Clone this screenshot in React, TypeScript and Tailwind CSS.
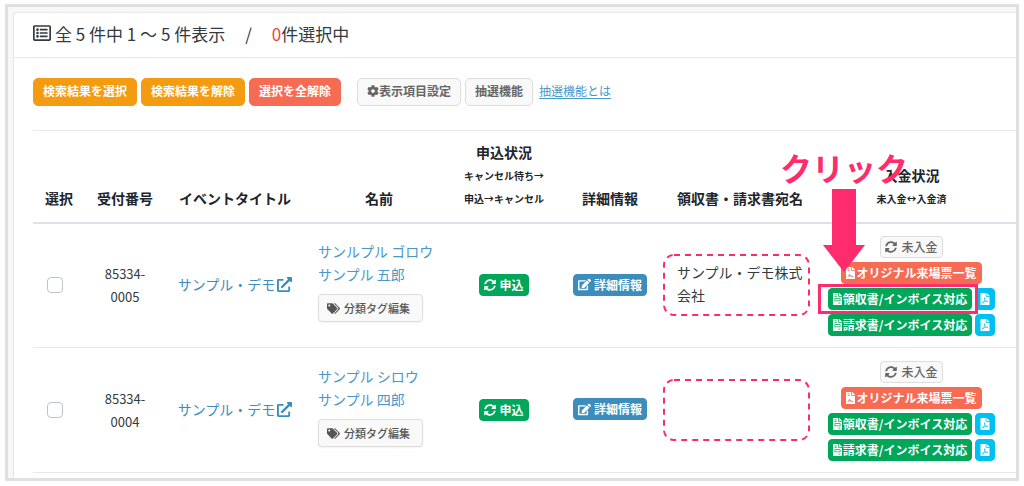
import type { ReactNode } from "react";
import {
  FaCog,
  FaEdit,
  FaExternalLinkAlt,
  FaFileContract,
  FaFileInvoice,
  FaFilePdf,
  FaRegListAlt,
  FaSyncAlt,
  FaTags,
} from "react-icons/fa";

type Entry = {
  id: [string, string];
  kana: string;
  name: string;
  addressee: string;
  highlighted: boolean;
};

const entries: Entry[] = [
  { id: ["85334-", "0005"], kana: "サンルプル ゴロウ", name: "サンプル 五郎", addressee: "サンプル・デモ株式会社", highlighted: true },
  { id: ["85334-", "0004"], kana: "サンプル シロウ", name: "サンプル 四郎", addressee: "", highlighted: false },
];

const toneClasses = {
  amber: "bg-[#f39c12] text-white border-[#f39c12]",
  red: "bg-[#f66b54] text-white border-[#f66b54]",
  green: "bg-[#00a65a] text-white border-[#00a65a]",
  blue: "bg-[#3c8dbc] text-white border-[#3c8dbc]",
  cyan: "bg-[#00c0ef] text-white border-[#00c0ef]",
  plain: "bg-[#f9f9f9] text-[#666] border-[#ddd]",
};

function Button({ tone, size, label, children }: { tone: keyof typeof toneClasses; size: "md" | "sm"; label?: string; children: ReactNode }) {
  const box = size === "md" ? "h-7 px-[9px] pb-0.5 rounded-[5px]" : "h-[22px] px-1 rounded";
  return (
    <button
      type="button"
      aria-label={label}
      className={`inline-flex shrink-0 items-center justify-center whitespace-nowrap border text-xs font-bold ${box} ${toneClasses[tone]}`}
    >
      {children}
    </button>
  );
}

function Row({ entry }: { entry: Entry }) {
  return (
    <tr className="h-[125px] border-b border-[#e6e8ea]">
      <td className="pr-2 pb-1 text-center">
        <input
          type="checkbox"
          aria-label={`${entry.id.join("")} を選択`}
          className="inline-block size-4 appearance-none rounded border border-[#bcc4cc] bg-white align-middle"
        />
      </td>
      <td className="text-center text-[13px]">
        {entry.id[0]}
        <br />
        {entry.id[1]}
      </td>
      <td className="pb-0.5 text-center">
        <a href="#event" className="inline-flex items-center text-[#3c8dbc]">
          サンプル・デモ
          <FaExternalLinkAlt className="ml-0.5 size-[15px]" />
        </a>
      </td>
      <td className="pb-2 pl-[13px]">
        <a href="#member" className="block text-[#4a98c9]">
          {entry.kana}
          <br />
          {entry.name}
        </a>
        <div className="mt-2 flex">
          <button
            type="button"
            className="flex h-7 items-center rounded border border-[#ddd] bg-[#f9f9f9] pr-3 pl-2 text-[11px] font-medium text-[#555] shadow-xs"
          >
            <FaTags className="mr-1 size-[13px]" />
            分類タグ編集
          </button>
        </div>
      </td>
      <td className="text-center">
        <Button tone="green" size="sm">
          <FaSyncAlt className="mr-[3px]" />
          申込
        </Button>
      </td>
      <td className="text-center">
        <Button tone="blue" size="sm">
          <FaEdit className="mr-[3px] size-[13px]" />
          詳細情報
        </Button>
      </td>
      <td>
        <div className="relative h-[60px] py-1.5 pl-3">
          <svg className="absolute inset-0 h-full w-[146px] overflow-visible" fill="none" aria-hidden="true">
            <rect x="-1" y="0" width="145" height="60" rx="10" stroke="#fb2c6b" strokeWidth="2" strokeDasharray="6 5" />
          </svg>
          {entry.addressee}
        </div>
      </td>
      <td className="pt-0.5 pr-2">
        <div className="flex flex-col items-center gap-1">
          <Button tone="plain" size="sm">
            <FaSyncAlt className="mr-1" />
            <span className="font-medium">未入金</span>
          </Button>
          <Button tone="red" size="sm">
            <FaFileContract className="mr-px w-[9px]" />
            オリジナル来場票一覧
          </Button>
          {["領収書/インボイス対応", "請求書/インボイス対応"].map((label, i) => (
            <div key={label} className="relative flex gap-[3px]">
              <Button tone="green" size="sm">
                <FaFileInvoice className="mr-px w-[9px]" />
                {label}
              </Button>
              <Button tone="cyan" size="sm" label={`${label} PDF`}>
                <FaFilePdf className="w-2.5" />
              </Button>
              {entry.highlighted && i === 0 && (
                <span className="pointer-events-none absolute -top-1 -left-2.5 h-[30px] w-40 border-3 border-[#fe2c6c]" />
              )}
            </div>
          ))}
        </div>
      </td>
    </tr>
  );
}

export default function App() {
  return (
    <div className="bg-white px-[5px] pt-1 pb-[7px] font-['Noto_Sans_CJK_JP',sans-serif] text-sm leading-[23px] text-[#333a40]">
      <div className="border-3 border-[#e0e0e0] bg-[#f7f7f7] pt-[5px] pl-[5px]">
        <main className="relative rounded-tl border-t border-l border-[#e6e6e6] bg-white">
          <header className="flex h-[45px] items-center border-b border-[#e6e6e6] pb-1 pl-[19px] text-[17px]">
            <FaRegListAlt className="mr-1 size-[18px]" />
            <h1 className="whitespace-pre">全 5 件中 1 ～ 5 件表示</h1>
            <span className="mx-5">/</span>
            <span>
              <span className="text-[#f43f3f]">0</span>件選択中
            </span>
          </header>
          <div className="pl-[19px]">
            <div className="flex items-center gap-1 pt-5 pb-6">
              <Button tone="amber" size="md">検索結果を選択</Button>
              <Button tone="amber" size="md">検索結果を解除</Button>
              <Button tone="red" size="md">選択を全解除</Button>
              <span className="w-2" />
              <Button tone="plain" size="md">
                <FaCog />
                表示項目設定
              </Button>
              <Button tone="plain" size="md">抽選機能</Button>
              <a href="#lottery" className="ml-0.5 pb-0.5 text-xs text-[#4a98c9] underline underline-offset-2">
                抽選機能とは
              </a>
            </div>
            <table className="w-full table-fixed border-collapse">
              <colgroup>
                <col className="w-[52px]" />
                <col className="w-20" />
                <col className="w-[140px]" />
                <col className="w-[148px]" />
                <col className="w-[102px]" />
                <col className="w-[110px]" />
                <col className="w-[150px]" />
                <col />
              </colgroup>
              <thead>
                <tr className="h-[92px] border-t border-b-2 border-t-[#e6e8ea] border-b-[#dee2e6] align-bottom text-[#212529] *:pb-3">
                  <th>選択</th>
                  <th>受付番号</th>
                  <th>イベントタイトル</th>
                  <th>名前</th>
                  <th>
                    申込状況
                    <small className="block text-[10px] leading-[23px]">
                      キャンセル待ち→
                      <br />
                      申込→キャンセル
                    </small>
                  </th>
                  <th>詳細情報</th>
                  <th>領収書・請求書宛名</th>
                  <th className="pr-2">
                    入金状況
                    <small className="block text-[10px] leading-[23px]">未入金↔入金済</small>
                  </th>
                </tr>
              </thead>
              <tbody>
                {entries.map((entry) => (
                  <Row key={entry.name} entry={entry} />
                ))}
              </tbody>
            </table>
            <div className="h-[5px]" />
          </div>
          <div className="pointer-events-none absolute top-[132px] right-[108px] text-center text-[#fe2c6c]">
            <p className="text-[32px] leading-11 font-bold">クリック</p>
            <svg className="mx-auto h-[83px] w-[42px]" viewBox="0 0 42 83" fill="currentColor" aria-hidden="true">
              <path d="M9 0h24v56h9L21 83 0 56h9z" />
            </svg>
          </div>
        </main>
      </div>
    </div>
  );
}
